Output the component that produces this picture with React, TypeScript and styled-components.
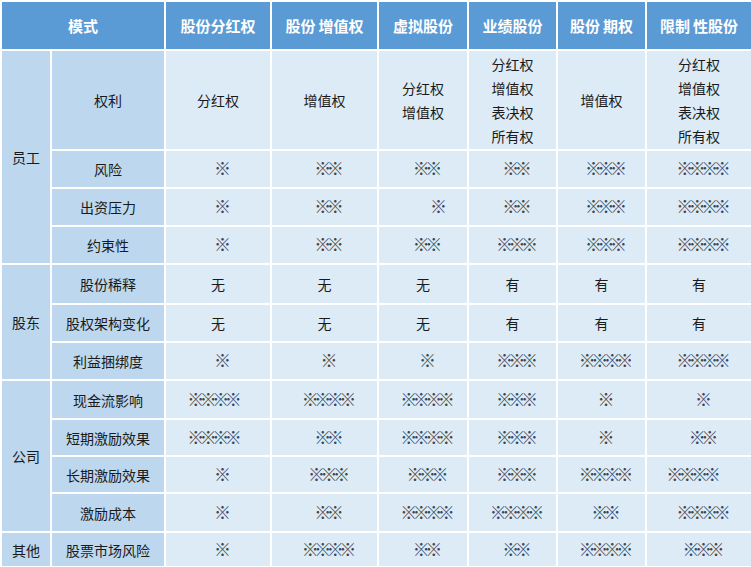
import React from 'react';
import styled, {createGlobalStyle} from 'styled-components';

const GlobalStyle = createGlobalStyle`
  html, body {
    margin: 0;
    padding: 0;
    background: #fff;
  }
  body {
    font-family: "Noto Sans CJK SC", "Noto Sans", sans-serif;
    color: #1a1a1a;
  }
`;

type Cell = string | string[];

type Row = {
    label: string;
    height: number;
    cells: Cell[];
    shift?: number[];
};

type Group = {
    name: string;
    rows: Row[];
};

// 헤더의 작은 공백은 원본 그대로 (thin space)
const columns = ['股份分红权', '股份\u2009增值权', '虚拟股份', '业绩股份', '股份\u2009期权', '限制\u2009性股份'];
const colWidths = [50, 114, 106, 107, 90, 89, 89, 106];

const S = (n: number) => '※'.repeat(n);

const groups: Group[] = [
    {
        name: '员工',
        rows: [
            {
                label: '权利',
                height: 100,
                cells: [
                    '分红权',
                    '增值权',
                    ['分红权', '增值权'],
                    ['分红权', '增值权', '表决权', '所有权'],
                    '增值权',
                    ['分红权', '增值权', '表决权', '所有权']
                ]
            },
            {label: '风险', height: 38, cells: [S(1), S(2), S(2), S(2), S(3), S(4)]},
            {label: '出资压力', height: 38, cells: [S(1), S(2), S(1), S(2), S(3), S(4)], shift: [0, 0, 11, 0, 0, 0]},
            {label: '约束性', height: 38, cells: [S(1), S(2), S(2), S(3), S(3), S(4)]}
        ]
    },
    {
        name: '股东',
        rows: [
            {label: '股份稀释', height: 40, cells: ['无', '无', '无', '有', '有', '有']},
            {label: '股权架构变化', height: 38, cells: ['无', '无', '无', '有', '有', '有']},
            {label: '利益捆绑度', height: 38, cells: [S(1), S(1), S(1), S(3), S(4), S(4)]}
        ]
    },
    {
        name: '公司',
        rows: [
            {label: '现金流影响', height: 39, cells: [S(4), S(4), S(4), S(3), S(1), S(1)], shift: [-8, 0, 0, 0, 0, 0]},
            {label: '短期激励效果', height: 37, cells: [S(4), S(2), S(4), S(3), S(1), S(2)], shift: [-8, 0, 0, 0, 0, 0]},
            {label: '长期激励效果', height: 37, cells: [S(1), S(3), S(3), S(3), S(4), S(4)], shift: [0, 0, 0, 0, 0, -10]},
            {label: '激励成本', height: 39, cells: [S(1), S(2), S(4), S(4), S(2), S(4)]}
        ]
    },
    {
        name: '其他',
        rows: [
            {label: '股票市场风险', height: 35, cells: [S(1), S(4), S(2), S(2), S(4), S(3)]}
        ]
    }
];

const isStars = (c: string) => c.startsWith('※');

export default function App() {
    return (
        <>
            <GlobalStyle/>
            <Table>
                <colgroup>
                    {colWidths.map((w, i) => <col key={i} style={{width: w}}/>)}
                </colgroup>
                <thead>
                    <tr style={{height: 49}}>
                        <HeadCell colSpan={2}>模式</HeadCell>
                        {columns.map(c => <HeadCell key={c}>{c}</HeadCell>)}
                    </tr>
                </thead>
                <tbody>
                    {groups.map(g => g.rows.map((r, ri) => (
                        <tr key={g.name + r.label} style={{height: r.height}}>
                            {ri === 0 && <GroupCell rowSpan={g.rows.length}>{g.name}</GroupCell>}
                            <LabelCell>{r.label}</LabelCell>
                            {r.cells.map((c, ci) => (
                                <DataCell key={ci} $shift={r.shift ? r.shift[ci] : 0}>
                                    {Array.isArray(c)
                                        ? <Lines>{c.map(l => <span key={l}>{l}</span>)}</Lines>
                                        : isStars(c) ? <Stars>{c}</Stars> : c}
                                </DataCell>
                            ))}
                        </tr>
                    )))}
                </tbody>
            </Table>
        </>
    );
}

const Table = styled.table`
  width: 751px;
  table-layout: fixed;
  border-collapse: collapse;
  font-size: 14px;

  td, th {
    border: 2px solid #fff;
    padding: 0;
    text-align: center;
    vertical-align: middle;
  }
`;

const HeadCell = styled.th`
  background: #5b9bd5;
  color: #fff;
  font-size: 15px;
  font-weight: 700;
  white-space: pre;
`;

const GroupCell = styled.td`
  background: #bdd7ee;
`;

const LabelCell = styled.td`
  background: #bdd7ee;
`;

const DataCell = styled.td<{ $shift: number }>`
  background: #ddebf7;
  padding-left: ${({$shift}) => ($shift > 0 ? $shift * 2 : 0)}px !important;
  padding-right: ${({$shift}) => ($shift < 0 ? -$shift * 2 : 0)}px !important;
`;

const Lines = styled.div`
  display: flex;
  flex-direction: column;
  align-items: center;
  line-height: 24px;
`;

const Stars = styled.span`
  font-size: 17px;
  line-height: 1;
  letter-spacing: -4.5px;
  padding-left: 4.5px;
  color: #3a4652;
`;
